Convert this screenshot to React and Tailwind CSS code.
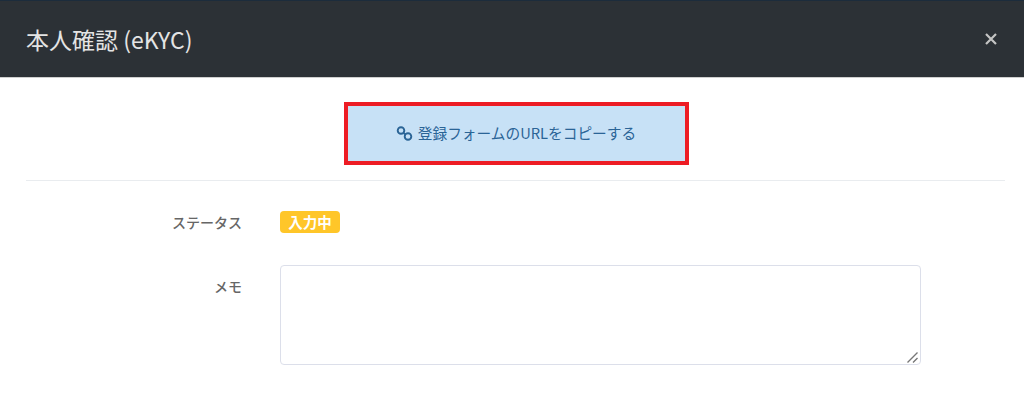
import React from 'react';

const font = "font-['Noto_Sans_CJK_JP','Noto_Sans',sans-serif]";

function LinkIcon() {
  return (
    <svg className="w-[17px] h-[17px]" viewBox="0 0 17 17" fill="none" stroke="currentColor" strokeWidth="1.9">
      <circle cx="5" cy="5.5" r="3.3" />
      <circle cx="12" cy="11.5" r="3.3" />
      <path d="M7.5 8l2 1.5" />
    </svg>
  );
}

export default function App() {
  return (
    <div className={`w-[1024px] h-[410px] overflow-hidden bg-white ${font}`}>
      {/* Modal header */}
      <div className="h-[78px] bg-[#2c3136] border-t border-[#1c2c3c] flex items-center justify-between px-[26px] border-b border-b-[#cfcfcf]">
        <h5 className="text-[23px] leading-[30px] font-normal text-[#e4e4e4]">本人確認 (eKYC)</h5>
        <svg className="w-[12px] h-[12px] mr-[1px] text-[#c4c4c4]" viewBox="0 0 12 12" fill="none" stroke="currentColor" strokeWidth="2.2">
          <path d="M1 1l10 10M11 1L1 11" />
        </svg>
      </div>

      {/* Modal body */}
      <div className="pl-[26px] pr-[19px] pt-[24px]">
        <div className="flex justify-center pb-[15px] border-b border-[#e9ecef]">
          <button className="w-[345px] h-[63px] ml-[1px] border-4 border-[#ed1c24] bg-[#c7e1f6] text-[#2a6496] text-[14.7px] flex items-center justify-center gap-[5px]">
            <LinkIcon />
            <span>登録フォームのURLをコピーする</span>
          </button>
        </div>

        <div className="mt-[30px] flex items-center">
          <div className="w-[216px] text-right text-[14px] leading-[22px] font-medium text-[#666666]">ステータス</div>
          <div className="ml-[38px] h-[22px] w-[60px] justify-center rounded-[4px] bg-[#ffc629] text-white text-[14.5px] font-bold flex items-center">入力中</div>
        </div>

        <div className="mt-[32px] flex items-start">
          <div className="w-[216px] text-right text-[14px] leading-[26px] pt-[8px] font-medium text-[#666666]">メモ</div>
          <div className="relative ml-[38px] w-[641px] h-[100px]">
            <textarea className="block w-full h-full border border-[#dcdfea] rounded-[4px] bg-white resize-none" />
            <svg className="absolute right-[3px] bottom-[2px] w-[11px] h-[11px] text-[#777777]" viewBox="0 0 11 11" fill="none" stroke="currentColor" strokeWidth="1.4">
              <path d="M0.5 10.5L10.5 0.5M6 10.5L10.5 6" />
            </svg>
          </div>
        </div>
      </div>
    </div>
  );
}
